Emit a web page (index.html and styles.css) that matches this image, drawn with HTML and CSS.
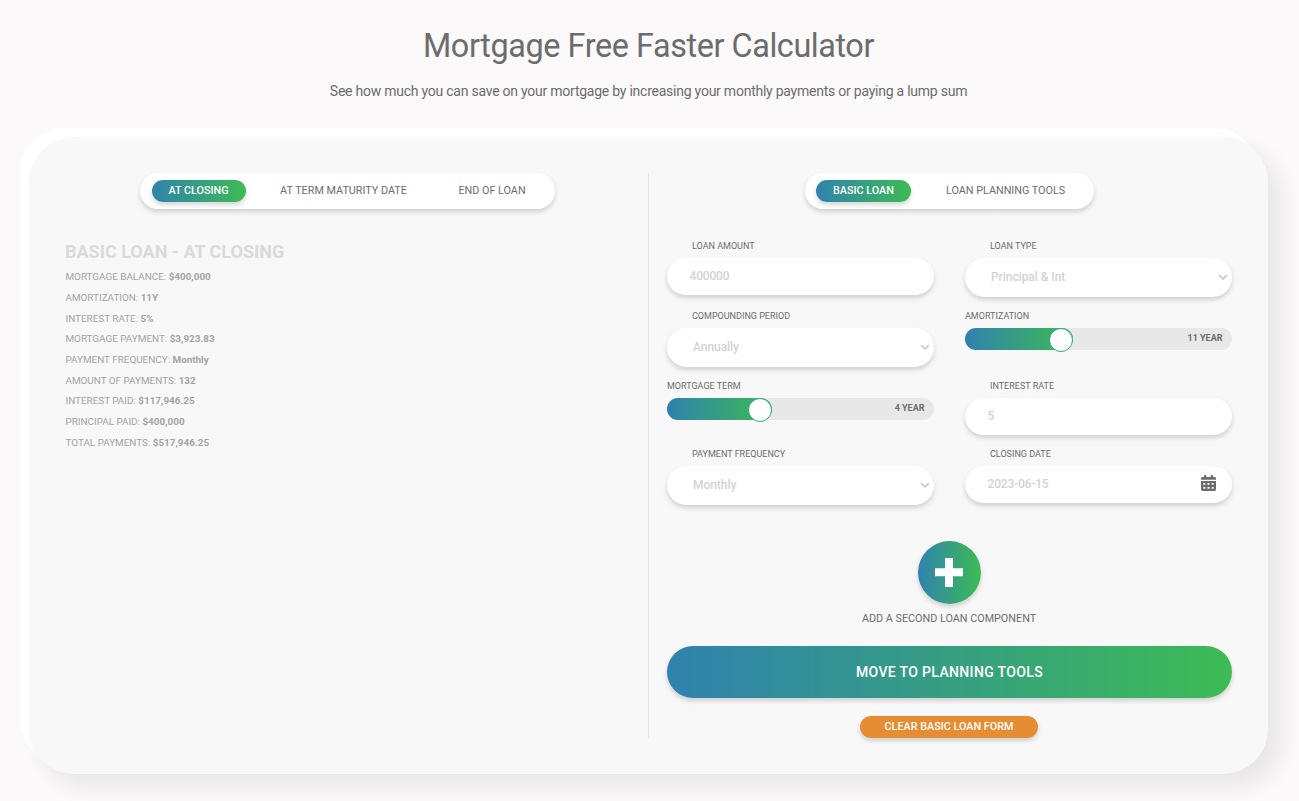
FILE: index.html
```html
<!DOCTYPE html>
<html lang="en">
<head>
<meta charset="utf-8">
<title>Mortgage Free Faster Calculator</title>
<link rel="stylesheet" href="styles.css">
</head>
<body>
<header class="intro">
  <h1 class="title"><span>Mortgage Free Faster Calculator</span></h1>
  <p class="subtitle"><span>See how much you can save on your mortgage by increasing your monthly payments or paying a lump sum</span></p>
</header>
<main class="card">
  <section class="results">
    <nav class="tabs tabs-results">
      <a class="tab active">AT CLOSING</a>
      <a class="tab">AT TERM MATURITY DATE</a>
      <a class="tab">END OF LOAN</a>
    </nav>
    <h2 class="results-title">BASIC LOAN - AT CLOSING</h2>
    <ul class="summary">
      <li>MORTGAGE BALANCE: <b>$400,000</b></li>
      <li>AMORTIZATION: <b>11Y</b></li>
      <li>INTEREST RATE: <b>5%</b></li>
      <li>MORTGAGE PAYMENT: <b>$3,923.83</b></li>
      <li>PAYMENT FREQUENCY: <b>Monthly</b></li>
      <li>AMOUNT OF PAYMENTS: <b>132</b></li>
      <li>INTEREST PAID: <b>$117,946.25</b></li>
      <li>PRINCIPAL PAID: <b>$400,000</b></li>
      <li>TOTAL PAYMENTS: <b>$517,946.25</b></li>
    </ul>
  </section>
  <section class="form">
    <nav class="tabs tabs-form">
      <a class="tab active">BASIC LOAN</a>
      <a class="tab">LOAN PLANNING TOOLS</a>
    </nav>
    <div class="fields">
      <div class="field">
        <div class="label">LOAN AMOUNT</div>
        <div class="control amount"><span>400000</span></div>
      </div>
      <div class="field">
        <div class="label">LOAN TYPE</div>
        <div class="control select"><span>Principal &amp; Int</span><svg class="chevron" viewBox="0 0 10 7"><path d="M1.2 1.2 5 5 8.8 1.2"/></svg></div>
      </div>
      <div class="field">
        <div class="label">COMPOUNDING PERIOD</div>
        <div class="control select"><span>Annually</span><svg class="chevron" viewBox="0 0 10 7"><path d="M1.2 1.2 5 5 8.8 1.2"/></svg></div>
      </div>
      <div class="field">
        <div class="label flush">AMORTIZATION</div>
        <div class="slider"><div class="fill" style="width:107.5px"><i class="thumb"></i></div><b class="value">11 YEAR</b></div>
      </div>
      <div class="field">
        <div class="label flush">MORTGAGE TERM</div>
        <div class="slider"><div class="fill" style="width:105px"><i class="thumb"></i></div><b class="value">4 YEAR</b></div>
      </div>
      <div class="field">
        <div class="label">INTEREST RATE</div>
        <div class="control"><span>5</span></div>
      </div>
      <div class="field">
        <div class="label">PAYMENT FREQUENCY</div>
        <div class="control select"><span>Monthly</span><svg class="chevron" viewBox="0 0 10 7"><path d="M1.2 1.2 5 5 8.8 1.2"/></svg></div>
      </div>
      <div class="field">
        <div class="label">CLOSING DATE</div>
        <div class="control date"><span>2023-06-15</span>
          <svg class="calendar" viewBox="0 0 15 16"><path fill-rule="evenodd" d="M0 4.8V3.4Q0 2 1.4 2H3V.8Q3 0 3.8 0h.7q.8 0 .8.8V2h4.4V.8q0-.8.8-.8h.7q.8 0 .8.8V2h1.6Q15 2 15 3.4v1.4zM0 6h15v8.6q0 1.4-1.4 1.4H1.4Q0 16 0 14.6zM2.300 8v1.800h2V8zm4.200 0v1.800h2V8zm4.200 0v1.800h2V8zM2.300 12v1.800h2V12zm4.200 0v1.800h2V12zm4.200 0v1.800h2V12z"/></svg>
        </div>
      </div>
    </div>
    <button class="add" aria-label="Add"><svg viewBox="0 0 28 29"><path d="M10 0h8v10.2h10v8H18V29h-8V18.2H0v-8h10z"/></svg></button>
    <div class="add-label"><span>ADD A SECOND LOAN COMPONENT</span></div>
    <button class="primary"><span>MOVE TO PLANNING TOOLS</span></button>
    <button class="clear"><span>CLEAR BASIC LOAN FORM</span></button>
  </section>
</main>
</body>
</html>
```
FILE: styles.css
```css
* { box-sizing: border-box; }
body {
  margin: 0;
  height: 801px;
  overflow: hidden;
  background: #fbf9fa;
  color: #6c6c6c;
  font-family: Roboto, "Liberation Sans", sans-serif;
  font-weight: 500;
}
.intro { height: 137px; text-align: center; padding-top: 25px; }
.title {
  margin: 0 2px 0 0;
  font-size: 32.4px;
  line-height: 42px;
  font-weight: 400;
  letter-spacing: -.42px;
}
.subtitle {
  margin: 14px 2px 0 0;
  font-size: 14px;
  line-height: 20px;
  font-weight: 400;
  letter-spacing: -.24px;
}
.card {
  width: 1239px;
  height: 637px;
  margin-left: 29px;
  padding: 36px;
  border-radius: 45px;
  background: #f8f8f8;
  box-shadow: 13px 13px 20px #e8e6e7, -9px -9px 0 #fff;
  display: grid;
  grid-template-columns: 584px 565px;
  column-gap: 18px;
}
.results {
  height: 565px;
  padding-right: 18px;
  border-right: 1px solid #e6e6e6;
}
.form { display: flex; flex-direction: column; align-items: center; }
.tabs {
  display: flex;
  height: 36px;
  margin: 0 auto;
  padding: 7px 12px;
  border-radius: 18px;
  background: #fff;
  box-shadow: 0 3px 5px rgba(0, 0, 0, .16);
  font-size: 10.8px;
  line-height: 21px;
}
.tabs-results { width: 415px; }
.tabs-form { width: 289px; padding-left: 11px; }
.tab {
  height: 22px;
  padding: 0 17px 0 16.5px;
  border-radius: 11px;
  white-space: nowrap;
  font-weight: 400;
}
.tab + .tab { margin-left: 18px; }
.tabs-form .tab { padding: 0 17px; }
.active {
  color: #fff;
  font-weight: 500;
  background: linear-gradient(90deg, #2f82ae, #3dbb54);
  box-shadow: 0 3px 5px rgba(0, 0, 0, .16);
}
.results-title {
  margin: 32px 0 0;
  font-size: 18px;
  line-height: 22px;
  font-weight: 700;
  color: #dadada;
}
.summary {
  list-style: none;
  margin: 4.2px 0 0;
  padding: 0 0 0 .5px;
  font-size: 9.9px;
  line-height: 20.7px;
  font-weight: 400;
  color: #a3a3a3;
}
.summary b { font-weight: 700; }
.fields {
  width: 565px;
  margin-top: 29px;
  display: grid;
  grid-template-columns: 267px 267px;
  grid-template-rows: 70px 70px 68px 59px;
  column-gap: 31px;
}
.label {
  height: 20px;
  padding-left: 25px;
  font-size: 9px;
  line-height: 16px;
  font-weight: 400;
}
.flush { padding-left: 0; }
.control {
  display: flex;
  justify-content: space-between;
  height: 37px;
  padding: 0 16px 0 22.5px;
  border-radius: 19px;
  background: #fff;
  box-shadow: 0 3px 5px rgba(0, 0, 0, .16);
  color: #d3d3d3;
  font-size: 12px;
  letter-spacing: -.18px;
  line-height: 36px;
}
.select {
  height: 39px;
  padding: 0 4px 0 26px;
  letter-spacing: -.05px;
  line-height: 38px;
  border-radius: 20px;
}
.chevron {
  width: 10px;
  height: 7px;
  margin-top: 16px;
  fill: none;
  stroke: #ccc;
  stroke-width: 1.8;
}
.calendar { width: 15px; height: 16px; margin-top: 9px; fill: #6c6c6c; }
.slider {
  display: flex;
  justify-content: space-between;
  height: 22px;
  padding-right: 9.5px;
  border-radius: 11px;
  background: #e8e8e8;
  font-size: 9px;
  line-height: 20px;
}
.fill {
  display: flex;
  justify-content: flex-end;
  height: 22px;
  border-radius: 11px;
  background: linear-gradient(90deg, #2f82ae, #3dbb54);
}
.thumb {
  width: 24px;
  height: 24px;
  border: 1px solid #2fa58d;
  border-radius: 50%;
  background: #fff;
}
.value { font-weight: 700; }
button { border: 0; padding: 0; font-family: inherit; font-weight: 500; color: #fff; }
.add {
  display: flex;
  align-items: center;
  justify-content: center;
  width: 63px;
  height: 63px;
  margin-top: 36px;
  padding-right: 1px;
  border-radius: 50%;
  background: linear-gradient(90deg, #2f82ae, #3dbb54);
  box-shadow: 0 3px 5px rgba(0, 0, 0, .16);
}
.add svg { width: 28px; height: 29px; fill: #fff; }
.add-label {
  margin: 4px 1px 0 0;
  font-size: 10.8px;
  line-height: 21px;
  font-weight: 400;
}
.primary {
  width: 565px;
  height: 52px;
  margin-top: 17px;
  border-radius: 26px;
  background: linear-gradient(90deg, #2f82ae, #3dbb54);
  box-shadow: 0 3px 5px rgba(0, 0, 0, .16);
  font-size: 14px;
  line-height: 52px;
  letter-spacing: .35px;
}
.clear {
  width: 178px;
  height: 22px;
  margin: 18px 1px 0 0;
  padding-bottom: 1px;
  border-radius: 11px;
  background: #e68c32;
  box-shadow: 0 3px 5px rgba(0, 0, 0, .16);
  font-size: 10.8px;
  line-height: 20px;
}
```
